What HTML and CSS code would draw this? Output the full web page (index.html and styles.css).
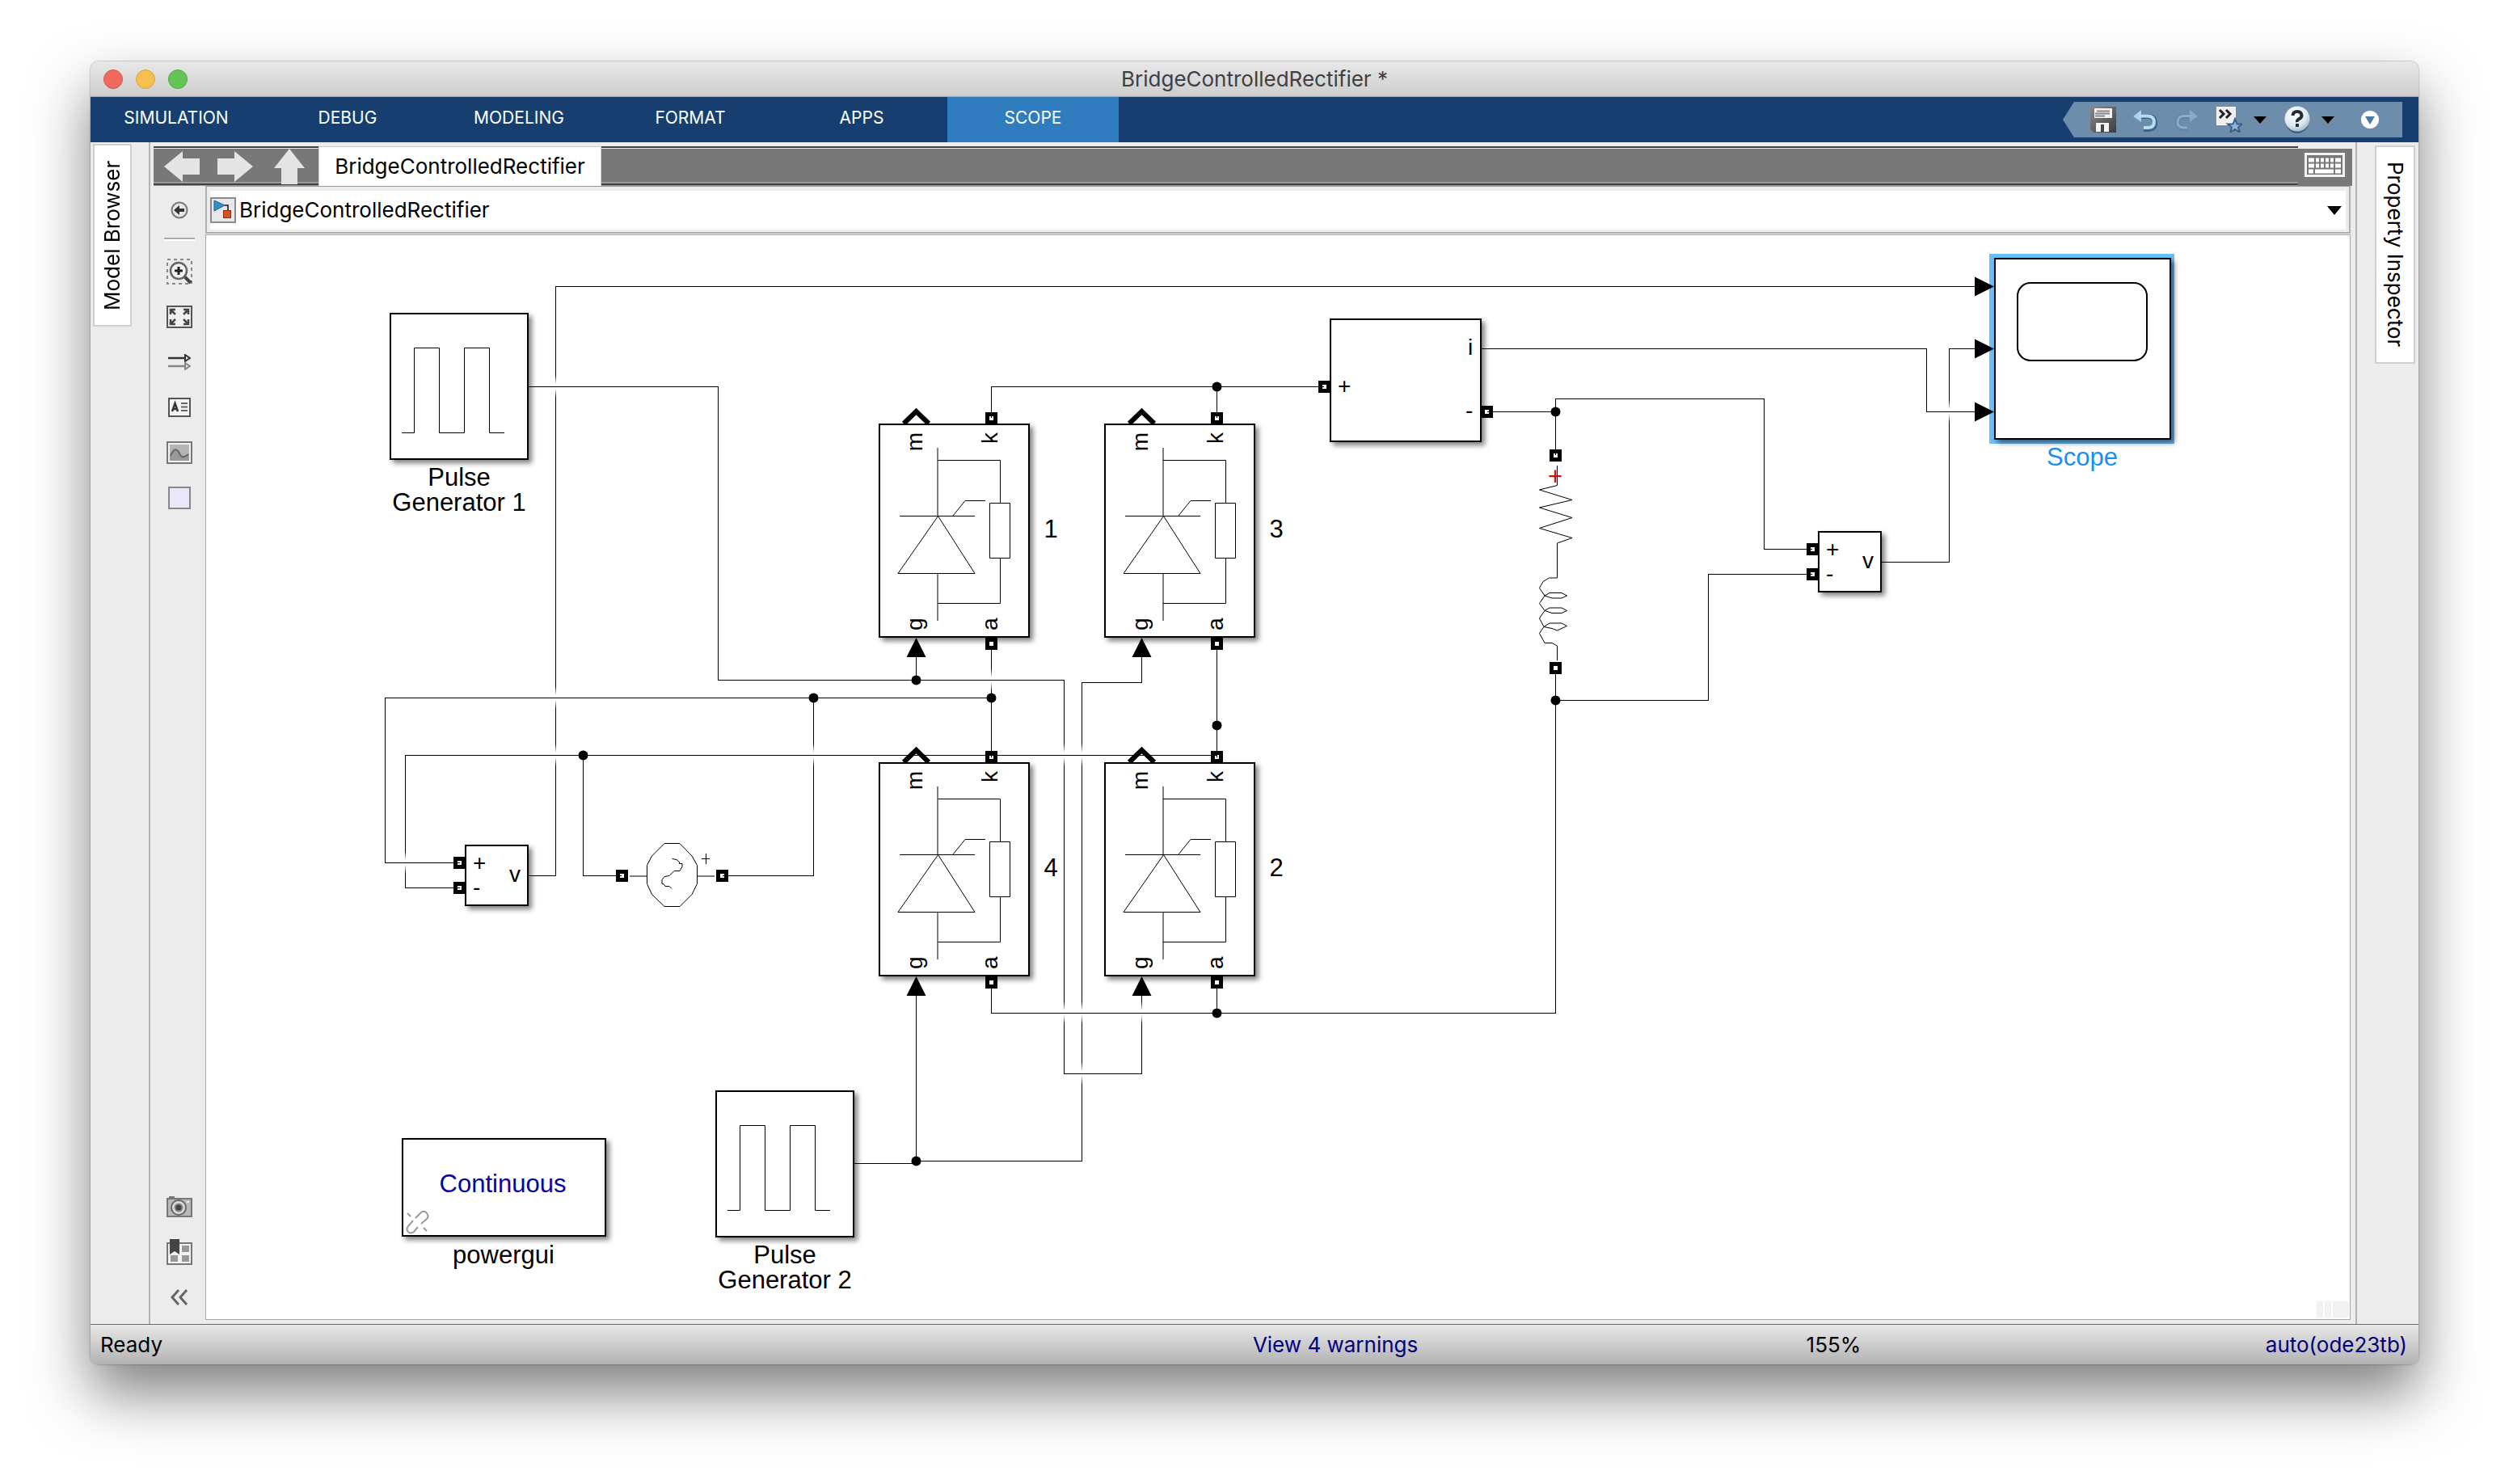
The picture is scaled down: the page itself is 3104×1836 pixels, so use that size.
FILE: index.html
```html
<!DOCTYPE html>
<html lang="en">
<head>
<meta charset="utf-8">
<title>BridgeControlledRectifier *</title>
<link rel="stylesheet" href="styles.css">
</head>
<body>
<div class="window">
  <header class="titlebar">
    <div class="lights">
      <button class="light light-close" aria-label="Close"></button>
      <button class="light light-min" aria-label="Minimize"></button>
      <button class="light light-zoom" aria-label="Zoom"></button>
    </div>
    <h1 class="title">BridgeControlledRectifier *</h1>
  </header>

  <nav class="toolstrip">
    <button class="strip-tab">SIMULATION</button>
    <button class="strip-tab">DEBUG</button>
    <button class="strip-tab">MODELING</button>
    <button class="strip-tab">FORMAT</button>
    <button class="strip-tab">APPS</button>
    <button class="strip-tab strip-tab-active">SCOPE</button>
    <div class="quick">
      <button class="quick-button" aria-label="Save">
        <svg width="32" height="32" viewBox="0 0 32 32"><defs><linearGradient id="disk" x1="0" y1="0" x2="1" y2="1"><stop offset="0" stop-color="#8a8a8a"/><stop offset="1" stop-color="#3c3c3c"/></linearGradient></defs><path d="M0 0H32V32H4L0 28Z" fill="url(#disk)"/><rect x="5" y="2" width="22" height="12" fill="#f2f2f2"/><path d="M8 5.500H24M6 8.500H24M6 11.500H18" stroke="#888" stroke-width="2"/><rect x="7" y="20" width="16" height="11" fill="#f4f4f4"/><rect x="13" y="22" width="4" height="9" fill="#444"/></svg>
      </button>
      <button class="quick-button" aria-label="Undo">
        <svg width="32" height="32" viewBox="0 0 32 32"><path d="M8 12H19Q28 12 28 20T19 28H14" fill="none" stroke="#38648f" stroke-width="6"/><path d="M1 12L11 4V19Z" fill="#a9d2ee"/><path d="M8 11.500H19Q27 12 27 19T19 26H14" fill="none" stroke="#b9dcf2" stroke-width="4"/></svg>
      </button>
      <button class="quick-button" aria-label="Redo">
        <svg width="32" height="32" viewBox="0 0 32 32"><path d="M20 12H11Q4 12 4 19T11 27H16" fill="none" stroke="#5e86ab" stroke-width="6"/><path d="M29 12L19 4V19Z" fill="#88abc8"/><path d="M21 11.500H12Q4 12 4 19T12 26H16" fill="none" stroke="#8cadc8" stroke-width="3"/></svg>
      </button>
      <button class="quick-button" aria-label="Favorites">
        <svg width="32" height="32" viewBox="0 0 32 32"><rect x="0.500" y="0.500" width="23" height="22" fill="#eee" stroke="#fff"/><path d="M4 4L9 9L4 14M12 4L17 9L12 14" fill="none" stroke="#222" stroke-width="3"/><path d="M23 15L25.500 21.500H32L27 25.500L29 32L23 28L17 32L19 25.500L14 21.500H20.500Z" fill="#8fb6da" stroke="#35608e" stroke-width="2"/></svg>
        <svg width="16" height="9" viewBox="0 0 16 9"><path d="M0 0H16L8 9Z"/></svg>
      </button>
      <button class="quick-button" aria-label="Help">
        <svg width="32" height="34" viewBox="0 0 32 34"><defs><radialGradient id="ball" cx=".4" cy=".3" r=".8"><stop offset="0" stop-color="#fff"/><stop offset=".6" stop-color="#dfe8f0"/><stop offset="1" stop-color="#90abc4"/></radialGradient></defs><ellipse cx="16" cy="18" rx="15" ry="16" fill="#3c6085"/><circle cx="16" cy="16" r="15.500" fill="url(#ball)"/><path d="M10.500 12Q11 7 16 7T21.500 12Q21.500 14.500 18.500 16T16 20" fill="none" stroke="#222c38" stroke-width="4"/><rect x="14" y="22" width="4" height="4" fill="#222c38"/></svg>
        <svg width="16" height="9" viewBox="0 0 16 9"><path d="M0 0H16L8 9Z"/></svg>
      </button>
      <button class="quick-button quick-more" aria-label="More options">
        <svg width="22" height="22" viewBox="0 0 22 22"><circle cx="11" cy="11" r="11" fill="#fff"/><path d="M5 7H17L11 17Z" fill="#4a7aa8"/></svg>
      </button>
    </div>
  </nav>

  <div class="workspace">
    <aside class="side side-left"><button class="side-tab side-tab-left">Model Browser</button></aside>

    <section class="center">
      <div class="docbar">
        <div class="docbar-strip">
          <div class="nav-buttons">
            <button class="nav-button" aria-label="Back"><svg width="46" height="40" viewBox="0 0 46 40"><path d="M1 20L24 1V10H45V30H24V39Z" fill="#e4e4e4"/></svg></button>
            <button class="nav-button" aria-label="Forward"><svg width="46" height="40" viewBox="0 0 46 40"><path d="M45 20L22 1V10H1V30H22V39Z" fill="#e4e4e4"/></svg></button>
            <button class="nav-button" aria-label="Up to parent"><svg width="44" height="44" viewBox="-4 0 44 44"><path d="M20 0L39 24H30V44H10V24H1Z" fill="#e4e4e4"/></svg></button>
          </div>
          <button class="doc-tab">BridgeControlledRectifier</button>
        </div>
        <button class="keyboard" aria-label="Keyboard shortcuts">
          <svg width="50" height="30" viewBox="0 0 50 30"><rect x="1.500" y="1.500" width="47" height="27" fill="#787878" stroke="#f0f0f0" stroke-width="3"/><path d="M5 9H45M5 16H45" stroke="#fff" stroke-width="5" stroke-dasharray="7 2 4 2 4 2 4 2 4 2 7 0"/><path d="M5 23H11M13 23H36M38 23H45" stroke="#fff" stroke-width="5"/></svg>
        </button>
      </div>

      <div class="editor">
        <div class="palette">
          <button class="tool" aria-label="Hide explorer bar"><svg width="22" height="22" viewBox="0 0 22 22"><circle cx="11" cy="11" r="9.500" fill="#e6e6e6" stroke="#777" stroke-width="2"/><path d="M4 11L11 5V9H17V13H11V17Z" fill="#333"/></svg></button>
          <hr class="rule">
          <button class="tool" aria-label="Zoom"><svg width="32" height="32" viewBox="0 0 32 32"><rect x="1" y="1" width="30" height="30" fill="none" stroke="#888" stroke-width="2" stroke-dasharray="4 4"/><path d="M21 21L30 30" stroke="#444" stroke-width="4"/><circle cx="15" cy="15" r="10" fill="#f2f2f2" stroke="#666" stroke-width="2.500"/><path d="M10 15H20M15 10V20" stroke="#222" stroke-width="3"/></svg></button>
          <button class="tool" aria-label="Fit to view"><svg width="32" height="28" viewBox="0 0 32 28"><rect x="1" y="1" width="30" height="26" fill="#f0f0f0" stroke="#555" stroke-width="2"/><path d="M5 11V5H11M5 5L11 11M21 5H27V11M27 5L21 11M5 17V23H11M5 23L11 17M27 17V23H21M27 23L21 17" fill="none" stroke="#444" stroke-width="2.500"/></svg></button>
          <button class="tool" aria-label="Sample time"><svg width="28" height="20" viewBox="0 0 28 20"><path d="M0 5H21" stroke="#333" stroke-width="2.500"/><path d="M21 1L27 5L21 9Z" fill="#ddd" stroke="#333" stroke-width="2"/><path d="M0 15H21" stroke="#888" stroke-width="2.500"/><path d="M21 11L27 15L21 19Z" fill="#ddd" stroke="#888" stroke-width="2"/></svg></button>
          <button class="tool" aria-label="Annotation"><svg width="28" height="24" viewBox="0 0 28 24"><rect x="1" y="1" width="26" height="22" fill="#f2f2f2" stroke="#555" stroke-width="2"/><path d="M5 17L8.500 7L12 17M6 14H11" fill="none" stroke="#333" stroke-width="2.500"/><path d="M16 7H24M16 11.500H24M16 16H24" stroke="#666" stroke-width="2"/></svg></button>
          <button class="tool" aria-label="Image"><svg width="32" height="28" viewBox="0 0 32 28"><rect x="1" y="1" width="30" height="26" fill="#f2f2f2" stroke="#777" stroke-width="2"/><rect x="4" y="4" width="24" height="20" fill="#b4b4b4"/><path d="M4 18Q11 3 17 17Q20 22 28 16V24H4Z" fill="#999"/><path d="M5 18Q11 3 17 17Q20 22 27 16" fill="none" stroke="#666" stroke-width="2"/></svg></button>
          <button class="tool" aria-label="Area"><svg width="28" height="28" viewBox="0 0 28 28"><rect x="1" y="1" width="26" height="26" fill="#e8e8f8" stroke="#888" stroke-width="2"/></svg></button>
          <span class="spacer"></span>
          <button class="tool" aria-label="Screenshot"><svg width="32" height="26" viewBox="0 0 32 26"><rect x="3" y="0" width="7" height="4" fill="#777"/><rect x="1" y="3" width="30" height="22" fill="#b8b8b8" stroke="#777" stroke-width="2"/><circle cx="15" cy="14" r="9" fill="#ddd" stroke="#666" stroke-width="2"/><circle cx="15" cy="14" r="4.500" fill="#444" stroke="#888" stroke-width="2"/><path d="M25 7H28" stroke="#eee" stroke-width="2"/></svg></button>
          <button class="tool" aria-label="Viewmarks"><svg width="32" height="32" viewBox="0 0 32 32"><rect x="1" y="5" width="30" height="26" fill="#f2f2f2" stroke="#777" stroke-width="2"/><rect x="19" y="8" width="9" height="8" fill="#999"/><rect x="19" y="20" width="9" height="8" fill="#999"/><rect x="5" y="20" width="9" height="8" fill="#999"/><path d="M4 0H16V19L10 15L4 19Z" fill="#444"/></svg></button>
          <button class="tool" aria-label="Collapse palette"><svg width="22" height="20" viewBox="0 0 22 20"><path d="M10 1L2 10L10 19M20 1L12 10L20 19" fill="none" stroke="#666" stroke-width="3"/></svg></button>
        </div>

        <main class="main">
          <div class="address">
            <div class="address-field">
              <svg width="32" height="32" viewBox="0 0 32 32"><rect x="1" y="1" width="30" height="30" fill="#e8e8ea" stroke="#8a8a8a" stroke-width="2"/><path d="M18 10H22V18" fill="none" stroke="#444" stroke-width="2"/><path d="M5 4L18 10L5 17Z" fill="#3292c8" stroke="#1c5f92"/><rect x="16.500" y="16.500" width="9" height="9" fill="#d8501e" stroke="#8f2f10"/></svg>
              <a class="crumb" href="#model">BridgeControlledRectifier</a>
              <button class="address-more" aria-label="Path history"><svg width="18" height="11" viewBox="0 0 18 11"><path d="M0 0H18L9 11Z"/></svg></button>
            </div>
          </div>

          <div class="canvas" id="model">
            <svg class="diagram" width="2652" height="1340" viewBox="255 291 2652 1340">
              <defs>
                <linearGradient id="fade" x1="0" y1="0" x2="0" y2="1"><stop offset="0" stop-color="#fff" stop-opacity="0"/><stop offset=".4" stop-color="#fff"/><stop offset=".6" stop-color="#fff"/><stop offset="1" stop-color="#fff" stop-opacity="0"/></linearGradient>
                <rect id="hop" x="-2" y="-14" width="5" height="28" fill="url(#fade)"/>
                <g id="port"><rect width="15" height="15"/><rect x="5" y="5" width="5" height="5" fill="#fff"/></g>
                <path id="arrow-up" d="M0 0L12 24H-12Z"/>
                <path id="arrow-right" d="M0 0L-24 -12V12Z"/>
                <circle id="dot" r="6"/>
                <g id="pulse">
                  <rect class="block" x="1" y="1" width="170" height="180"/>
                  <path class="thin" d="M15 148.500H30.500V43.500H61.500V148.500H92.500V43.500H123.500V148.500H142"/>
                </g>
                <g id="thyristor">
                  <path d="M31 0L46.500 -15L62 0" fill="none" stroke="#000" stroke-width="6"/>
                  <rect class="block" x="1" y="1" width="185" height="263"/>
                  <use href="#port" x="132" y="-14"/>
                  <use href="#port" x="132" y="265"/>
                  <use href="#arrow-up" x="46.500" y="265"/>
                  <path class="thin" d="M73 30V114M73 185V244M73 45.500H150.500V98.500M150.500 167V222.500H73M26 114.500H119M92 114L107 95.500H132M73.500 114.500L119 185.500H24ZM137.500 98.500H162.500V166.500H137.500Z"/>
                  <text class="pin" text-anchor="end" transform="translate(54 11) rotate(-90)">m</text>
                  <text class="pin" text-anchor="end" transform="translate(147 11) rotate(-90)">k</text>
                  <text class="pin" transform="translate(54 256) rotate(-90)">g</text>
                  <text class="pin" transform="translate(147 256) rotate(-90)">a</text>
                </g>
                <g id="voltmeter">
                  <rect class="block" x="1" y="1" width="77" height="74"/>
                  <use href="#port" x="-14" y="15"/>
                  <use href="#port" x="-14" y="46"/>
                  <text class="pin" x="10" y="32">+</text>
                  <text class="pin" x="10" y="62">-</text>
                  <text class="pin" x="55" y="46">v</text>
                </g>
              </defs>

              <!-- blocks -->
              <use href="#pulse" x="482" y="387"/>
              <text class="label" x="568" y="601">Pulse</text>
              <text class="label" x="568" y="632">Generator 1</text>

              <use href="#pulse" x="885" y="1349"/>
              <text class="label" x="971" y="1563">Pulse</text>
              <text class="label" x="971" y="1594">Generator 2</text>

              <use href="#thyristor" x="1087" y="524"/>
              <text class="label" x="1300" y="665">1</text>
              <use href="#thyristor" x="1366" y="524"/>
              <text class="label" x="1579" y="665">3</text>
              <use href="#thyristor" x="1087" y="943"/>
              <text class="label" x="1300" y="1084">4</text>
              <use href="#thyristor" x="1366" y="943"/>
              <text class="label" x="1579" y="1084">2</text>

              <use href="#voltmeter" x="575" y="1045"/>
              <use href="#voltmeter" x="2249" y="657"/>

              <rect class="block" x="1646" y="395" width="186" height="151"/>
              <use href="#port" x="1631" y="471"/>
              <use href="#port" x="1832" y="502"/>
              <text class="pin" x="1655" y="487">+</text>
              <text class="pin" x="1816" y="439">i</text>
              <text class="pin" x="1813" y="517">-</text>

              <!-- AC source -->
              <use href="#port" x="762" y="1076"/>
              <use href="#port" x="886" y="1076"/>
              <path class="thin" d="M779 1084H800M863 1084H884M822 1043.500H841L856 1059L862.500 1070.500V1093.500L856 1106.500L841 1121.500H822L806.500 1106.500L800.500 1093.500V1070.500L806.500 1059ZM831.500 1062.500L837 1063.500L840.500 1066.500V1068.500H844V1072L841 1077.500H834L828 1083.500L822 1084.500L819 1088.500V1093.500H821L823 1096.500H828L831 1099.500M868 1062.500H878M873.500 1056V1069"/>

              <!-- series RL load -->
              <use href="#port" x="1917" y="556"/>
              <use href="#port" x="1917" y="819"/>
              <path class="thin" d="M1926.500 576V600.500L1904.500 606L1945 618.500L1904.500 628L1945 640.500L1904.500 653.500L1945 665.500L1926.500 672V715H1916.500L1909 719.500L1904.500 727.500L1911 737L1920 740H1932L1938.500 737L1932 733.500H1917L1911 737L1904.500 746.500L1911 755.500L1920 758.500H1932L1938.500 755.500L1932 752H1917L1911 755.500L1904.500 765L1910 775.500L1920 777.500L1926.500 780L1938.500 774.500L1932 771H1917L1910 775.500L1904.500 783.500L1911 795.500H1920L1926.500 799V817"/>
              <text class="label polarity" x="1924" y="600">+</text>

              <!-- powergui -->
              <rect class="block" x="498" y="1409" width="251" height="120"/>
              <text class="label continuous" x="622" y="1475">Continuous</text>
              <path class="broken-link" d="M514 1507L521 1500Q525 1497 528 1501T528 1508L521 1514M511 1510L505 1517Q502 1521 505 1524T512 1524L517 1518M504 1501L508 1505M524 1519L528 1523"/>
              <text class="label" x="623" y="1563">powergui</text>

              <!-- scope -->
              <rect x="2461" y="314" width="229" height="235" fill="#6cbffb"/>
              <rect class="block" x="2468" y="320" width="217" height="223"/>
              <rect x="2496" y="350" width="160" height="96" rx="16" fill="#fff" stroke="#000" stroke-width="2"/>
              <text class="label selected" x="2576" y="576">Scope</text>
              <use href="#arrow-right" x="2467" y="354.500"/>
              <use href="#arrow-right" x="2467" y="431.500"/>
              <use href="#arrow-right" x="2467" y="509.500"/>

              <!-- vertical wire runs -->
              <path class="wire" d="M687.500 354V1084M888.500 478V842M476.500 863V1068M501.500 934V1099M721.500 934V1084M1006.500 863V1084M1226.500 478V517M1226.500 804V937M1505.500 478V517M1505.500 804V937M1133.500 812V842M1133.500 1231V1437M1316.500 841V1329M1338.500 844V1437M1412.500 812V845M1412.500 1231V1329M1226.500 1223V1254M1505.500 1223V1254M1924.500 493V563M1924.500 834V1254M2182.500 493V680M2113.500 710V867M2383.500 431V510M2411.500 431V696"/>
              <!-- wires crossing without a junction fade out under the horizontal run -->
              <use href="#hop" x="687" y="478"/><use href="#hop" x="687" y="863"/><use href="#hop" x="687" y="934"/>
              <use href="#hop" x="501" y="1067"/><use href="#hop" x="1006" y="934"/><use href="#hop" x="1226" y="841"/>
              <use href="#hop" x="1316" y="934"/><use href="#hop" x="1338" y="934"/><use href="#hop" x="1316" y="1253"/>
              <use href="#hop" x="1338" y="1253"/><use href="#hop" x="1412" y="1253"/><use href="#hop" x="1338" y="1328"/>
              <use href="#hop" x="2411" y="509"/>
              <!-- horizontal wire runs -->
              <path class="wire" d="M687 354.500H2444M654 478.500H889M888 841.500H1317M476 863.500H1227M501 934.500H1506M476 1067.500H569M501 1098.500H569M654 1083.500H688M721 1083.500H769M894 1083.500H1007M1226 478.500H1638M1338 844.500H1413M1316 1328.500H1413M1226 1253.500H1925M1057 1439.500H1134M1133 1436.500H1339M1833 431.500H2384M1840 509.500H1925M1924 493.500H2183M2182 679.500H2242M2113 710.500H2242M1924 866.500H2114M2328 695.500H2412M2383 509.500H2444M2411 431.500H2444"/>
              <use href="#dot" x="1133.500" y="841.500"/><use href="#dot" x="1226.500" y="863.500"/><use href="#dot" x="1006.500" y="863.500"/>
              <use href="#dot" x="721.500" y="934.500"/><use href="#dot" x="1505.500" y="478.500"/><use href="#dot" x="1505.500" y="897.500"/>
              <use href="#dot" x="1505.500" y="1253.500"/><use href="#dot" x="1133.500" y="1436.500"/><use href="#dot" x="1924.500" y="509.500"/>
              <use href="#dot" x="1924.500" y="866.500"/>
            </svg>
            <div class="grip"><i class="grip-bar"></i><i class="grip-bar"></i><i class="grip-bar grip-wide"></i></div>
          </div>
        </main>
      </div>
    </section>

    <aside class="side side-right"><button class="side-tab side-tab-right">Property Inspector</button></aside>
  </div>

  <footer class="status">
    <span>Ready</span>
    <a class="status-link status-center" href="#warnings">View 4 warnings</a>
    <span class="status-center">155%</span>
    <a class="status-link status-end" href="#solver">auto(ode23tb)</a>
  </footer>
</div>
</body>
</html>
```
FILE: styles.css
```css
* { box-sizing: border-box; }

body {
  margin: 0;
  min-height: 100vh;
  display: flex;
  padding: 76px 112px 148px;
  background: #fff;
  color: #000;
  font: 26px/32px Inter, "Liberation Sans", sans-serif;
}

button {
  margin: 0;
  padding: 0;
  border: 0;
  background: none;
  color: inherit;
  font: inherit;
}

svg { display: block; flex: none; }

.window {
  flex: 1;
  min-width: 0;
  display: flex;
  flex-direction: column;
  border-radius: 10px;
  overflow: hidden;
  background: #ececec;
  box-shadow: 0 0 2px rgba(0, 0, 0, .5), 0 36px 72px rgba(0, 0, 0, .5);
}

/* title bar */
.titlebar {
  height: 44px;
  display: grid;
  grid-template-columns: 1fr auto 1fr;
  align-items: center;
  padding: 0 16px;
  background: linear-gradient(#e8e8e8, #cdcdcd);
  border-bottom: 1px solid #a8a8a8;
}
.lights { display: flex; gap: 16px; }
.light { width: 24px; height: 24px; border-radius: 50%; border: 1px solid; }
.light-close { background: #ee6a5f; border-color: #d55248; }
.light-min { background: #f5bf4f; border-color: #d9a23a; }
.light-zoom { background: #62c555; border-color: #4fa73f; }
.title { margin: 0; font-size: 26px; font-weight: 400; color: #404040; }

/* toolstrip */
.toolstrip {
  height: 56px;
  display: flex;
  background: #163f6f;
  color: #fff;
  font-size: 21px;
}
.strip-tab { width: 212px; height: 56px; padding-bottom: 4px; }
.strip-tab-active { background: #2f7dbf; }
.quick {
  height: 44px;
  margin: 6px 20px 0 auto;
  padding: 0 18px 0 34px;
  display: flex;
  align-items: center;
  gap: 20px;
  background: #6e8dab;
  clip-path: polygon(14px 0, 100% 0, 100% 100%, 14px 100%, 0 50%);
}
.quick-button { display: flex; align-items: center; gap: 14px; }
.quick-button:nth-child(4), .quick-button:nth-child(5) { padding-right: 2px; }
.quick-more { width: 44px; justify-content: center; }

/* workspace */
.workspace { flex: 1; display: flex; min-height: 0; }
.side { flex: none; display: flex; align-items: flex-start; }
.side-left { width: 74px; padding: 2px 3px; border-right: 2px solid #b4b4b4; }
.side-right { width: 78px; padding: 4px 4px 4px 22px; border-left: 2px solid #b4b4b4; }
.side-tab {
  background: #fff;
  border: 2px solid #cfcfcf;
  writing-mode: vertical-rl;
}
.side-tab-left { width: 48px; height: 226px; transform: rotate(180deg); }
.side-tab-right { width: 50px; height: 270px; }

.center {
  flex: 1;
  min-width: 0;
  display: flex;
  flex-direction: column;
  padding: 5px 4px 0;
}
.docbar { height: 49px; display: flex; }
.docbar-strip {
  flex: 1;
  display: flex;
  background: linear-gradient(#404040 2px, #e8e8e8 2px 3px, #787878 3px 44px, #9a9a9a 44px 46px, #404040 46px 48px, #999 48px);
}
.nav-buttons {
  width: 204px;
  display: flex;
  align-items: center;
  gap: 20px;
  padding-left: 12px;
}
.doc-tab { width: 350px; background: #fff; border: solid #ccc; border-width: 1px 1px 0; }
.keyboard {
  width: 67px;
  margin-top: 3px;
  padding: 5px 0 0 8px;
  display: flex;
  align-items: flex-start;
  background: #787878;
}

.editor { flex: 1; display: flex; min-height: 0; }
.palette { width: 64px; display: flex; flex-direction: column; padding: 2px 0 5px; }
.tool { width: 64px; height: 56px; display: flex; align-items: center; justify-content: center; }
.rule { width: 38px; height: 4px; margin: 6px 13px 10px; border: 0; background: linear-gradient(#aaa 2px, #fff 2px); }
.spacer { flex: 1; }

.main { flex: 1; min-width: 0; display: flex; flex-direction: column; margin: 0 2px 5px 0; }
.address {
  height: 59px;
  margin-bottom: 1px;
  padding: 5px 4px 3px;
  border: 2px solid #b0b0b0;
  border-top: 1px solid #999;
}
.address-field { height: 48px; display: flex; align-items: center; background: #fff; padding-right: 5px; }
.crumb { margin-left: 4px; color: #000; text-decoration: none; }
.address-more { margin-left: auto; }

.canvas {
  flex: 1;
  position: relative;
  overflow: hidden;
  background: #fff;
  border: 1px solid #a8a8a8;
}
.grip { position: absolute; right: 1px; bottom: 2px; display: flex; gap: 2px; }
.grip-bar { width: 8px; height: 20px; background: #f2f2f2; }
.grip-wide { width: 20px; }

/* diagram */
.diagram { font-family: "Liberation Sans", Arial, sans-serif; }
.block { fill: #fff; stroke: #000; stroke-width: 2; filter: drop-shadow(4px 4px 3px rgba(0, 0, 0, .5)); }
.thin { fill: none; stroke: #000; stroke-width: 1; }
.wire { fill: none; stroke: #000; stroke-width: 1; shape-rendering: crispEdges; }
.label { font-size: 31px; text-anchor: middle; }
.pin { font-size: 28px; }
.polarity { fill: #d01010; }
.continuous { fill: #0a00a0; }
.selected { fill: #1a8fee; }
.broken-link { fill: none; stroke: #999; stroke-width: 2; }

/* status bar */
.status {
  height: 50px;
  display: grid;
  grid-template-columns: 307fr 157fr 154fr 102fr;
  align-items: center;
  padding: 0 14px 0 12px;
  background: linear-gradient(#e8e8e8, #b2b2b2);
  border-top: 1px solid #6a6a6a;
}
.status-center { text-align: center; }
.status-end { text-align: right; }
.status-link { color: #00007f; text-decoration: none; }
```
